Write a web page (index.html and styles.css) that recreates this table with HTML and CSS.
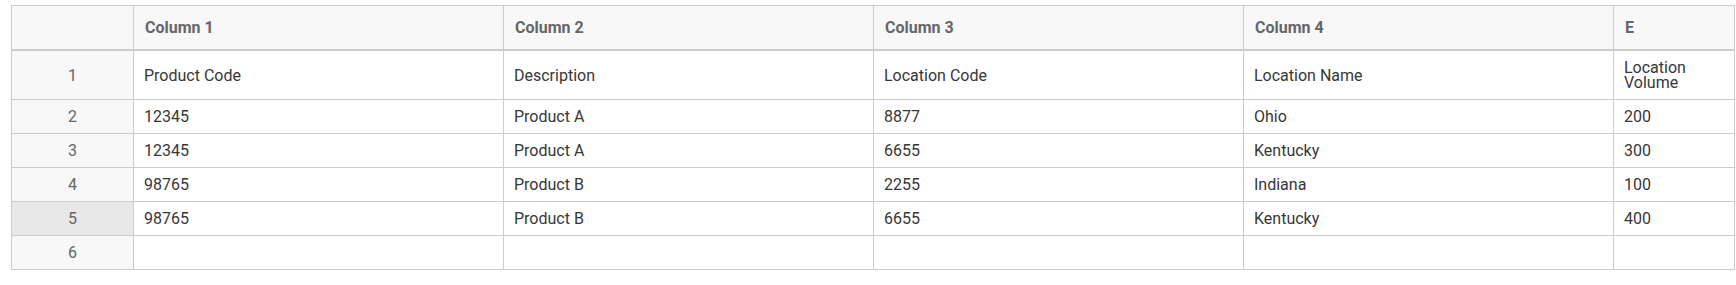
FILE: index.html
```html
<!DOCTYPE html>
<html>
<head>
<meta charset="utf-8">
<link rel="stylesheet" href="styles.css">
</head>
<body>
<table class="grid">
  <colgroup>
    <col class="c-row">
    <col class="c-wide">
    <col class="c-wide">
    <col class="c-wide">
    <col class="c-wide">
    <col class="c-last">
  </colgroup>
  <thead>
    <tr>
      <th class="corner"></th>
      <th>Column 1</th>
      <th>Column 2</th>
      <th>Column 3</th>
      <th>Column 4</th>
      <th>E</th>
    </tr>
  </thead>
  <tbody>
    <tr class="first">
      <td class="rh">1</td>
      <td>Product Code</td>
      <td>Description</td>
      <td>Location Code</td>
      <td>Location Name</td>
      <td class="wrap">Location Volume</td>
    </tr>
    <tr>
      <td class="rh">2</td>
      <td>12345</td>
      <td>Product A</td>
      <td>8877</td>
      <td>Ohio</td>
      <td>200</td>
    </tr>
    <tr>
      <td class="rh">3</td>
      <td>12345</td>
      <td>Product A</td>
      <td>6655</td>
      <td>Kentucky</td>
      <td>300</td>
    </tr>
    <tr>
      <td class="rh">4</td>
      <td>98765</td>
      <td>Product B</td>
      <td>2255</td>
      <td>Indiana</td>
      <td>100</td>
    </tr>
    <tr>
      <td class="rh selected">5</td>
      <td>98765</td>
      <td>Product B</td>
      <td>6655</td>
      <td>Kentucky</td>
      <td>400</td>
    </tr>
    <tr>
      <td class="rh">6</td>
      <td></td>
      <td></td>
      <td></td>
      <td></td>
      <td></td>
    </tr>
  </tbody>
</table>
</body>
</html>
```
FILE: styles.css
```css
html, body {
  margin: 0;
  padding: 0;
  background: #ffffff;
}

body {
  padding: 5px 0 0 11px;
  font-family: Roboto, "Liberation Sans", sans-serif;
}

.grid {
  border-collapse: collapse;
  table-layout: fixed;
  width: 1723px;
  font-size: 16px;
  color: #373737;
}

.c-row { width: 122px; }
.c-wide { width: 370px; }
.c-last { width: 121px; }

.grid th,
.grid td {
  border: 1px solid #cccccc;
  padding: 0 10px;
  text-align: left;
  vertical-align: middle;
  white-space: nowrap;
  overflow: hidden;
}

.grid thead th {
  background: #f8f8f8;
  color: #666666;
  font-size: 16px;
  font-weight: 700;
  height: 43px;
  padding: 0 11px;
  border-bottom: 2px solid #cccccc;
}

.grid tbody td {
  height: 33px;
  line-height: 15px;
}

.grid tbody tr.first td {
  height: 48px;
}

.grid td.wrap {
  white-space: normal;
  padding-right: 20px;
}

.grid td.rh {
  background: #f8f8f8;
  color: #666666;
  text-align: center;
}

.grid td.rh.selected {
  background: #e8e8e8;
}
```
